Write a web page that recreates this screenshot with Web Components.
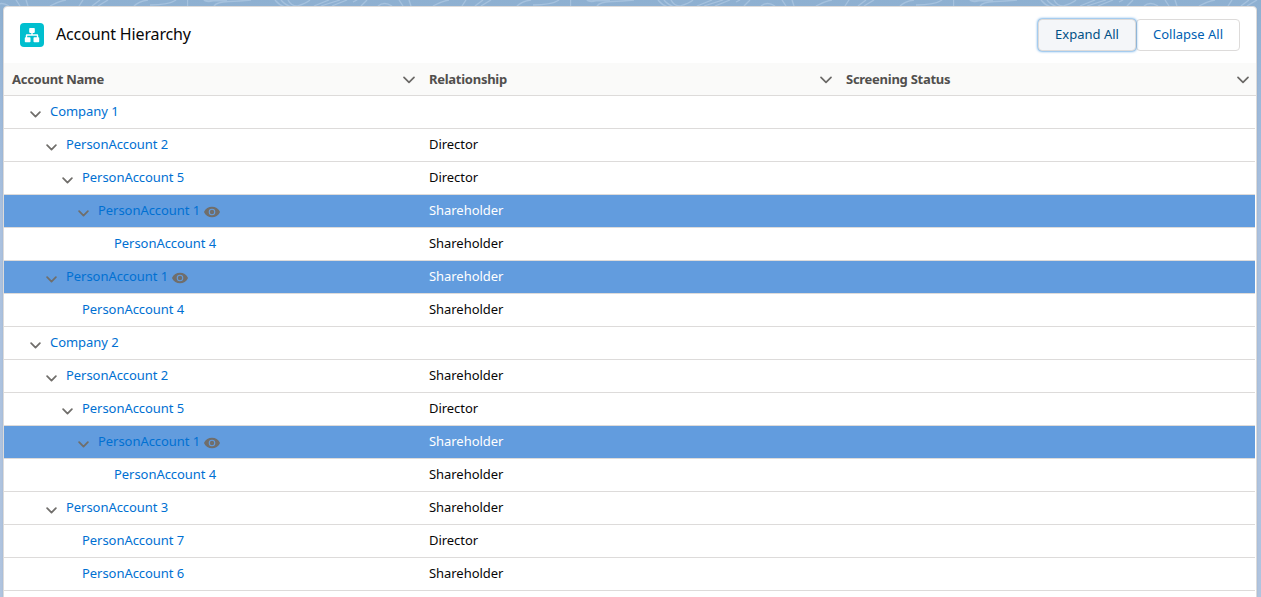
<!DOCTYPE html>
<html lang="en">
<head>
<meta charset="utf-8">
<title>Account Hierarchy</title>
<style>
    body {
        margin: 0;
        height: 597px;
        overflow: hidden;
        background: #b0c4df;
        font: 13px/20px "Noto Sans", "Open Sans", sans-serif;
        color: #080707;
    }
</style>
</head>
<body>
<page-backdrop>
    <hierarchy-card heading="Account Hierarchy">
        <button-group slot="actions">
            <action-button active>Expand All</action-button>
            <action-button>Collapse All</action-button>
        </button-group>
        <tree-grid></tree-grid>
    </hierarchy-card>
</page-backdrop>

<script>
const chevron = `
    <svg viewBox="0 0 12 8" width="12" height="8" fill="none" stroke="currentColor" stroke-width="1.7" stroke-linecap="round" stroke-linejoin="round">
        <path d="M1 1.3 6 6.300 11 1.3"/>
    </svg>`;

class PageBackdrop extends HTMLElement {
    constructor() {
        super();
        this.attachShadow({ mode: 'open' });
        this.shadowRoot.innerHTML = `
            <style>
                :host {
                    display: block;
                    position: relative;
                    box-sizing: border-box;
                    height: 597px;
                    padding: 6px 4px 0 3px;
                    overflow: hidden;
                    background: linear-gradient(#8eb0d1, #9bb8d9 90px, #aac1df 220px, #b0c4df);
                }

                .waves {
                    position: absolute;
                    top: 0;
                    left: 0;
                }

                ::slotted(*) {
                    position: relative;
                }
            </style>
            <svg class="waves" width="1261" height="60">
                <defs>
                    <pattern id="lines" width="383" height="60" patternUnits="userSpaceOnUse" x="187">
                        <g fill="none" stroke="#a6c2de" stroke-width="1.3">
                            <path d="M.5 0V6M27 6Q30 2 41 1.500T64 0M88 0Q92 5 98 7M94 0Q98 5 105 7M101 0Q104 6 110 6M110 6Q120 3 123 0M127 6 142 0M134 6 153 0M145 6 160 0M166 2 170 0M174 6 180 0M191 6Q197 1 205 6M212 0 216 6M222 0 224 6M246 6Q255 1 262 0M279 0 275 6M296 0 288 6M304 0 294 6M330 6Q335 1 344 0M346 5Q365 5 372 0"/>
                            <path stroke-width="2" d="M17 0Q20 2 26 .5H40"/>
                        </g>
                    </pattern>
                </defs>
                <rect width="1261" height="60" fill="url(#lines)"/>
            </svg>
            <slot></slot>
        `;
    }
}

class HierarchyCard extends HTMLElement {
    constructor() {
        super();
        this.attachShadow({ mode: 'open' });
        this.shadowRoot.innerHTML = `
            <style>
                :host {
                    display: block;
                    box-sizing: border-box;
                    height: 640px;
                    border: 1px solid #dddbda;
                    border-radius: 4px;
                    background: #fff;
                    overflow: hidden;
                    box-shadow: 0 2px 2px rgba(0, 0, 0, 0.1);
                }

                header {
                    display: flex;
                    align-items: center;
                    height: 56px;
                    padding: 0 16px;
                    box-sizing: border-box;
                }

                .icon {
                    display: block;
                    width: 24px;
                    height: 24px;
                    border-radius: 4px;
                    background: #00bfcf;
                }

                h2 {
                    flex: 1;
                    margin: 0 0 2px 12px;
                    font-size: 16px;
                    font-weight: 400;
                    line-height: 20px;
                    letter-spacing: -0.14px;
                }
            </style>
            <header>
                <svg class="icon" viewBox="0 0 24 24" fill="#fff">
                    <rect x="9.200" y="5" width="5.600" height="4.900" rx="0.8"/>
                    <path d="M11.300 9h1.400v2.300h4.600q.9 0 .9.900V15h-1.400v-2.300H7.200V15H5.800v-2.800q0-.9.900-.9h4.600z"/>
                    <rect x="4.800" y="14.300" width="5.700" height="4.900" rx="0.8"/>
                    <rect x="13.500" y="14.300" width="5.700" height="4.900" rx="0.8"/>
                </svg>
                <h2></h2>
                <slot name="actions"></slot>
            </header>
            <slot></slot>
        `;
    }

    connectedCallback() {
        this.shadowRoot.querySelector('h2').textContent = this.getAttribute('heading');
    }
}

class ButtonGroup extends HTMLElement {
    constructor() {
        super();
        this.attachShadow({ mode: 'open' });
        this.shadowRoot.innerHTML = `
            <style>
                :host {
                    display: flex;
                }
            </style>
            <slot></slot>
        `;
    }
}

class ActionButton extends HTMLElement {
    constructor() {
        super();
        this.attachShadow({ mode: 'open' });
        this.shadowRoot.innerHTML = `
            <style>
                :host {
                    display: block;
                    width: 104px;
                }

                :host([active]) {
                    width: 98px;
                    z-index: 1;
                }

                button {
                    display: block;
                    width: 100%;
                    height: 32px;
                    padding: 0 0 2px;
                    border: 1px solid #dddbda;
                    border-radius: 4px;
                    background: #fff;
                    color: #005fb2;
                    font: inherit;
                    white-space: nowrap;
                }

                :host([active]) button {
                    background: #f4f6f9;
                    color: #005085;
                    box-shadow: 0 0 3px #0070d2;
                }
            </style>
            <button type="button"><slot></slot></button>
        `;
    }
}

class ColumnHeader extends HTMLElement {
    constructor() {
        super();
        this.attachShadow({ mode: 'open' });
        this.shadowRoot.innerHTML = `
            <style>
                :host {
                    display: flex;
                    align-items: center;
                    justify-content: space-between;
                    box-sizing: border-box;
                    padding: 0 6px 0 8px;
                    color: #514f4d;
                    font-weight: 700;
                    letter-spacing: -0.27px;
                }

                :host(:last-child) {
                    padding-right: 7px;
                }

                svg {
                    display: block;
                    margin-top: 2px;
                    color: #6b6967;
                }
            </style>
            <slot></slot>${chevron}
        `;
    }
}

class TreeRow extends HTMLElement {
    constructor() {
        super();
        this.attachShadow({ mode: 'open' });
    }

    connectedCallback() {
        const eye = `
            <svg class="eye" viewBox="0 0 16 12" width="16" height="12">
                <path fill="#706e6b" fill-rule="evenodd" d="M8 .8C4.500.8 1.600 2.800.2 5.600q-.2.400 0 .8C1.600 9.200 4.500 11.200 8 11.200s6.400-2 7.800-4.800q.2-.4 0-.8C14.400 2.800 11.500.8 8 .8zm0 8.500a3.300 3.300 0 1 1 0-6.600 3.300 3.300 0 0 1 0 6.600z"/>
                <circle cx="8" cy="6" r="2.200" fill="#706e6b"/>
            </svg>`;
        const level = Number(this.getAttribute('level'));
        this.shadowRoot.innerHTML = `
            <style>
                :host {
                    display: grid;
                    grid-template-columns: 417px 417px 1fr;
                    align-items: center;
                    box-sizing: border-box;
                    height: 33px;
                    margin-right: 1px;
                    padding-bottom: 2px;
                    border-bottom: 1px solid #dddbda;
                    letter-spacing: -0.05px;
                }

                :host([highlighted]) {
                    background: #629cde;
                    color: #fff;
                }

                .name {
                    display: flex;
                    align-items: center;
                    padding-left: ${10 + level * 16}px;
                }

                .toggle {
                    width: 10px;
                    height: 7px;
                    margin: 6px 10px 0 0;
                    color: #706e6b;
                }

                .toggle svg {
                    display: block;
                    width: 11px;
                    height: 7px;
                    stroke-width: 2;
                }

                .eye {
                    display: block;
                    margin: 3px 0 0 4px;
                }

                a {
                    color: #0070d2;
                    text-decoration: none;
                }

                .relationship {
                    padding-left: 8px;
                }
            </style>
            <div class="name">
                <span class="toggle">${this.hasAttribute('expanded') ? chevron : ''}</span>
                <a><slot></slot></a>${this.hasAttribute('highlighted') ? eye : ''}
            </div>
            <div class="relationship">${this.getAttribute('relationship') || ''}</div>
        `;
    }
}

class TreeGrid extends HTMLElement {
    constructor() {
        super();
        this.attachShadow({ mode: 'open' });
        // name, level, relationship, expanded, highlighted
        const rows = [
            ['Company 1', 1, '', true],
            ['PersonAccount 2', 2, 'Director', true],
            ['PersonAccount 5', 3, 'Director', true],
            ['PersonAccount 1', 4, 'Shareholder', true, true],
            ['PersonAccount 4', 5, 'Shareholder'],
            ['PersonAccount 1', 2, 'Shareholder', true, true],
            ['PersonAccount 4', 3, 'Shareholder'],
            ['Company 2', 1, '', true],
            ['PersonAccount 2', 2, 'Shareholder', true],
            ['PersonAccount 5', 3, 'Director', true],
            ['PersonAccount 1', 4, 'Shareholder', true, true],
            ['PersonAccount 4', 5, 'Shareholder'],
            ['PersonAccount 3', 2, 'Shareholder', true],
            ['PersonAccount 7', 3, 'Director'],
            ['PersonAccount 6', 3, 'Shareholder']
        ];
        this.shadowRoot.innerHTML = `
            <style>
                :host {
                    display: block;
                }

                .columns {
                    display: grid;
                    grid-template-columns: 417px 417px 1fr;
                    box-sizing: border-box;
                    height: 33px;
                    border-bottom: 1px solid #dddbda;
                    background: #fafaf9;
                }
            </style>
            <div class="columns">
                <column-header>Account Name</column-header>
                <column-header>Relationship</column-header>
                <column-header>Screening Status</column-header>
            </div>
            ${rows.map(([name, level, relationship, expanded, highlighted]) => `
                <tree-row level="${level}" relationship="${relationship}"${expanded ? ' expanded' : ''}${highlighted ? ' highlighted' : ''}>${name}</tree-row>
            `).join('')}
        `;
    }
}

customElements.define('page-backdrop', PageBackdrop);
customElements.define('hierarchy-card', HierarchyCard);
customElements.define('button-group', ButtonGroup);
customElements.define('action-button', ActionButton);
customElements.define('column-header', ColumnHeader);
customElements.define('tree-row', TreeRow);
customElements.define('tree-grid', TreeGrid);
</script>
</body>
</html>
